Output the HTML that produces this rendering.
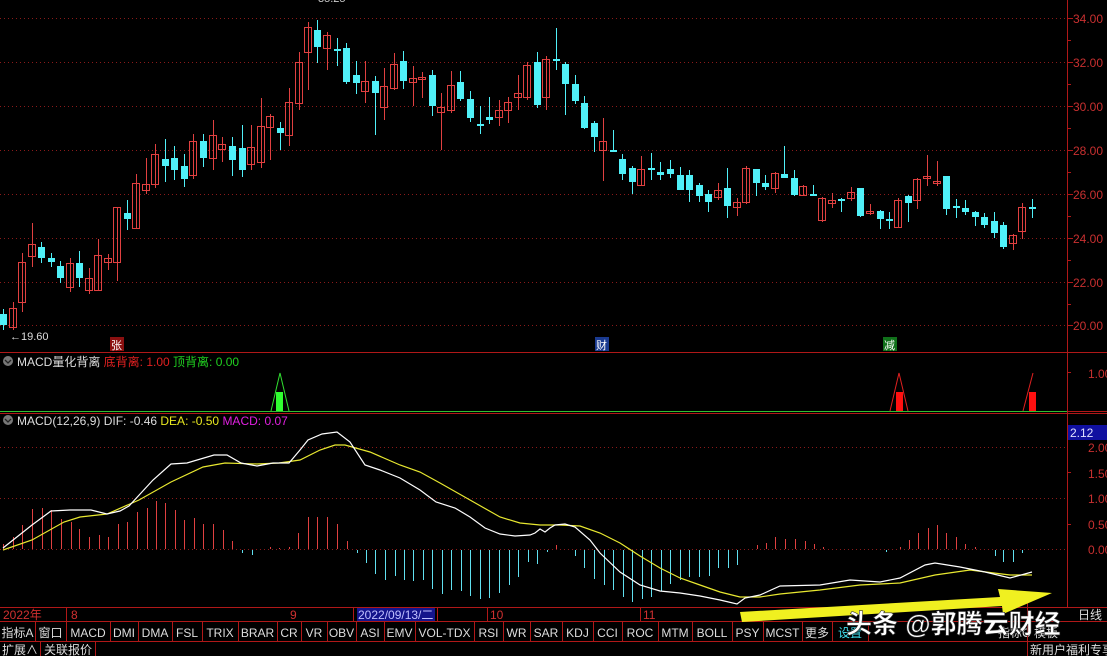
<!DOCTYPE html>
<html><head><meta charset="utf-8"><style>
html,body{margin:0;padding:0;background:#000;width:1107px;height:656px;overflow:hidden;}
svg{display:block;font-family:"Liberation Sans","Noto Sans CJK SC",sans-serif;}
</style></head><body>
<svg id="s" width="1107" height="656" viewBox="0 0 1107 656" xmlns="http://www.w3.org/2000/svg">
<rect width="1107" height="656" fill="#000"/>
<g id="grid" stroke="#8a1a1a" stroke-dasharray="1,3" stroke-width="1"></g>
<g id="cand"></g>
<g id="hist"></g>
<line x1="0" y1="352.5" x2="1107" y2="352.5" stroke="#b01818"/>
<line x1="0" y1="411.5" x2="1067" y2="411.5" stroke="#30c030"/>
<line x1="1067" y1="411.5" x2="1107" y2="411.5" stroke="#b01818"/>
<line x1="0" y1="413.5" x2="1107" y2="413.5" stroke="#b01818"/>
<line x1="1067.5" y1="0" x2="1067.5" y2="607" stroke="#b01818"/>
<g id="ticks" stroke="#b01818"></g>
<g fill="#c83030" font-size="12">
<text x="1073" y="23">34.00</text><text x="1073" y="67">32.00</text><text x="1073" y="111">30.00</text>
<text x="1073" y="155">28.00</text><text x="1073" y="199">26.00</text><text x="1073" y="243">24.00</text>
<text x="1073" y="287">22.00</text><text x="1073" y="330">20.00</text>
<text x="1088" y="378">1.00</text>
<text x="1088" y="452">2.00</text><text x="1088" y="478">1.50</text><text x="1088" y="503">1.00</text>
<text x="1088" y="529">0.50</text><text x="1088" y="554">0.00</text>
</g>
<rect x="1068" y="425" width="39" height="15" fill="#1010a0"/>
<text x="1070" y="437" fill="#e0e0ff" font-size="12">2.12</text>
<text x="318" y="2" fill="#ccc" font-size="11">35.25</text>
<text x="10" y="340" fill="#ddd" font-size="11">←19.60</text>
<rect x="110" y="337" width="14" height="14" fill="#8a1010"/><text x="111" y="349" fill="#fff" font-size="11">张</text>
<rect x="595" y="337" width="14" height="14" fill="#1a3a90"/><text x="596" y="349" fill="#fff" font-size="11">财</text>
<rect x="883" y="337" width="14" height="14" fill="#10701a"/><text x="884" y="349" fill="#fff" font-size="11">减</text>
<circle cx="8" cy="361" r="5" fill="#777"/><path d="M5,360 L8,363 L11,360" stroke="#222" fill="none" stroke-width="1.3"/>
<text x="17" y="366" font-size="12" fill="#ddd">MACD量化背离 <tspan fill="#e02020">底背离: 1.00</tspan> <tspan fill="#20d020">顶背离: 0.00</tspan></text>
<path d="M271,411 L280,373 L289,411" stroke="#30e030" fill="none"/><rect x="276" y="392" width="7" height="19" fill="#30ff30"/>
<path d="M890,411 L899,373 L908,411" stroke="#e02020" fill="none"/><rect x="896" y="392" width="7" height="19" fill="#ff1010"/>
<path d="M1023,411 L1033,373" stroke="#e02020" fill="none"/><rect x="1029" y="392" width="7" height="19" fill="#ff1010"/>
<circle cx="8" cy="420" r="5" fill="#777"/><path d="M5,419 L8,422 L11,419" stroke="#222" fill="none" stroke-width="1.3"/>
<text x="17" y="425" font-size="12" fill="#ddd">MACD(12,26,9) DIF: -0.46 <tspan fill="#e8e820">DEA: -0.50</tspan> <tspan fill="#e020e0">MACD: 0.07</tspan></text>
<polyline id="dea" fill="none" stroke="#e8e830" stroke-width="1.2"/>
<polyline id="dif" fill="none" stroke="#fff" stroke-width="1.2"/>
<rect x="0" y="607" width="1107" height="49" fill="#000"/>
<line x1="0" y1="607.5" x2="1107" y2="607.5" stroke="#b01818"/>
<line x1="0" y1="621.5" x2="1107" y2="621.5" stroke="#b01818"/>
<line x1="0" y1="641.5" x2="1107" y2="641.5" stroke="#b01818"/>
<g id="dl" stroke="#b01818"></g>
<rect x="357" y="608" width="78" height="13" fill="#14148c"/>
<g font-size="12" fill="#d03030">
<text x="3" y="619">2022年</text><text x="71" y="619">8</text><text x="290" y="619">9</text>
<text x="490" y="619">10</text><text x="643" y="619">11</text>
<text x="358" y="619" fill="#c0c0ff">2022/09/13/二</text>
</g>
<g id="tabs" font-size="12" fill="#ddd"></g>
<text x="2" y="654" font-size="12" fill="#ddd">扩展∧</text>
<line x1="40.5" y1="642" x2="40.5" y2="656" stroke="#b01818"/>
<text x="44" y="654" font-size="12" fill="#ddd">关联报价</text>
<line x1="95.5" y1="642" x2="95.5" y2="656" stroke="#b01818"/>
<text x="1030" y="654" font-size="12" fill="#ddd">新用户福利专享</text>
<text x="998" y="637" font-size="12" fill="#ddd">指标C 模板</text>
<text x="1078" y="619" font-size="12" fill="#ddd">日线</text>
<line x1="1027.5" y1="595" x2="1027.5" y2="656" stroke="#b01818"/>
<path d="M740,612 L1000,597 L998,589 L1052,593 L1003,614 L1002,606 L742,622 Z" fill="#f0f020"/>
<text x="846" y="633" font-size="26" fill="#fff" stroke="#333" stroke-width="0.6" font-weight="bold">头条 @郭腾云财经</text>
</svg>
<script>
var NS="http://www.w3.org/2000/svg";
function el(t,a,p){var e=document.createElementNS(NS,t);for(var k in a)e.setAttribute(k,a[k]);document.getElementById(p).appendChild(e);return e;}
[18,62,106,150,194,238,282,325].forEach(function(y){el('line',{x1:0,y1:y+.5,x2:1067,y2:y+.5},'grid');el('line',{x1:1067,y1:y+.5,x2:1073,y2:y+.5},'ticks');});
[447,498,549].forEach(function(y){el('line',{x1:0,y1:y+.5,x2:1067,y2:y+.5},'grid');});
[40,84,128,172,216,260,304,372,472,524].forEach(function(y){el('line',{x1:1067,y1:y+.5,x2:1071,y2:y+.5},'ticks');});
var C=[[3,314,325,'c'],[13,308,327,'r',302,330],[22,262,302,'r',253,312],[32,244,256,'r',223,267],[41,247,258,'c'],[51,258,262,'c'],[60,266,278,'c'],[70,263,287,'r'],[79,263,278,'c',251,287],[89,278,290,'r',268,294],[98,255,290,'r',239,290],[108,258,262,'r',254,270],[117,207,262,'r',207,281],[127,213,219,'c',200,230],[136,183,228,'r',174,228],[146,184,190,'r',158,194],[155,154,184,'r',144,188],[165,159,166,'c',139,182],[174,158,170,'c',146,180],[184,166,179,'c',154,187],[193,141,175,'r',134,179],[203,141,158,'c',134,167],[213,135,158,'r',120,170],[222,144,149,'r',137,162],[232,146,160,'c',137,176],[242,148,170,'c',125,177],[251,147,164,'r',125,170],[261,126,162,'r',98,168],[270,116,127,'r',114,160],[280,128,133,'c',122,150],[289,102,135,'r',88,146],[299,62,103,'r',52,110],[308,27,52,'r',0,90],[317,30,47,'c',20,63],[327,35,48,'r',32,70],[337,49,50,'c',38,66],[346,48,82,'c',43,84],
[356,75,83,'c',61,94],[365,81,91,'r',61,103],[375,81,93,'c',76,135],[384,86,107,'r',68,120],[394,64,88,'r',53,90],[403,61,81,'c',51,89],[413,78,82,'r',66,106],[422,77,79,'r',72,98],[432,75,106,'c',70,116],[441,107,112,'r',93,150],[451,85,110,'r',71,113],[460,82,99,'c',71,101],[470,99,118,'c',91,122],[480,124,125,'c',106,134],[489,117,120,'c',97,124],[499,110,117,'r',100,126],[508,102,110,'r',97,123],[518,93,97,'r',75,110],[527,65,97,'r',62,100],[537,62,105,'c',52,108],[546,59,97,'r',56,110],[556,59,61,'c',28,70],[565,64,84,'c',62,115],[575,84,101,'c',75,104],[584,103,128,'c',96,129],[594,123,137,'c',121,152],[603,141,150,'r',118,181],[613,150,152,'c',130,152],[622,159,174,'c',154,180],[632,168,182,'c',166,194],[641,169,185,'r',156,186],[651,168,170,'c',153,180],[660,172,175,'c',162,180],[670,169,174,'c',160,178],[680,175,190,'c',167,182],
[689,175,190,'c',170,202],[699,185,196,'c',183,202],[708,194,202,'c',190,212],[718,190,197,'r',183,200],[727,188,206,'c',168,218],[737,202,207,'r',198,216],[746,168,202,'r',166,204],[756,169,183,'c',169,196],[765,183,187,'c',175,190],[775,173,188,'r',172,193],[784,174,178,'c',146,178],[794,178,195,'c',170,196],[803,186,195,'r',185,196],[813,194,196,'c',185,196],[822,198,220,'r',197,222],[832,200,203,'r',193,208],[841,199,201,'c',198,212],[851,192,198,'r',187,201],[860,188,216,'c',188,217],[870,211,213,'r',204,215],[880,211,219,'c',210,229],[889,219,221,'c',212,229],[898,200,227,'r',198,227],[908,196,203,'c',195,222],[917,179,200,'r',178,209],[927,176,178,'r',155,186],[937,181,183,'r',161,186],[946,176,209,'c',176,215],[956,206,208,'c',199,218],[965,208,212,'c',200,215],[975,212,217,'c',211,226],[984,217,225,'c',213,228],[994,221,233,'c',212,238],[1003,225,247,'c',222,249],[1013,235,243,'r',234,250],[1022,207,231,'r',203,239],[1032,207,209,'c',199,218]];
C.forEach(function(c){var x=c[0],t=c[1],b=c[2],r=c[3]=='r',h=c[4]||t-5,l=c[5]||b+5;var col=r?'#e04040':'#50f0f8';
el('line',{x1:x+.5,y1:h,x2:x+.5,y2:l,stroke:col},'cand');
if(r){el('rect',{x:x-3.5,y:t+.5,width:7,height:Math.max(b-t,1),fill:'none',stroke:col},'cand');}
else el('rect',{x:x-3,y:t,width:7,height:Math.max(b-t,2),fill:col},'cand');});
var R=[[3,544],[13,537],[22,525],[32,509],[42,508],[51,510],[61,519],[71,522],[79,529],[89,537],[99,535],[108,537],[118,524],[127,522],[137,512],[147,508],[156,501],[165,503],[175,510],[184,520],[194,518],[203,524],[213,524],[223,530],[232,541],[270,547],[279,548],[289,547],[298,533],[308,517],[317,517],[327,517],[337,524],[347,541],[556,545],[757,545],[766,543],[775,537],[785,539],[795,539],[805,541],[814,544],[823,547],[900,547],[909,540],[918,533],[928,528],[937,525],[946,533],[956,537],[965,544],[975,547]];
R.forEach(function(r){el('line',{x1:r[0]+.5,y1:r[1],x2:r[0]+.5,y2:549,stroke:'#e04040'},'hist');});
var B=[[242,553],[252,555],[357,553],[366,563],[375,574],[385,580],[395,576],[404,580],[413,581],[423,580],[432,589],[442,594],[451,590],[461,591],[470,596],[480,599],[489,598],[499,593],[509,585],[518,577],[528,562],[537,564],[547,552],[575,556],[584,568],[594,579],[604,585],[613,590],[623,597],[632,602],[642,599],[651,597],[661,591],[670,584],[680,580],[689,577],[699,577],[709,576],[718,568],[728,568],[737,565],[886,552],[995,556],[1003,562],[1013,562],[1022,553]];
B.forEach(function(r){el('line',{x1:r[0]+.5,y1:550,x2:r[0]+.5,y2:r[1],stroke:'#60e0f0'},'hist');});
document.getElementById('dif').setAttribute('points',"3,548 32,525 51,511 70,510 91,510 107,514 120,511 129,506 153,480 171,464 187,463 214,455 227,455 241,463 257,466 273,463 289,463 300,450 308,440 322,434 337,432 350,442 365,465 380,470 400,478 420,490 436,502 455,508 470,517 485,528 500,534 515,536 530,535 535,533 540,529 545,532 550,528 555,525 565,524 575,527 590,540 600,553 620,572 640,585 660,591 680,593 700,596 720,600 737,604 745,598 760,595 780,586 820,585 850,580 880,582 900,578 925,565 935,563 960,567 985,572 1010,578 1032,572");
document.getElementById('dea').setAttribute('points',"3,550 32,540 64,522 80,517 107,514 139,500 171,482 203,467 225,463 257,464 279,463 300,460 320,450 335,445 345,445 370,452 400,465 420,472 440,483 470,500 500,517 520,523 540,525 560,525 580,526 600,533 620,543 640,556 660,568 680,578 700,585 720,592 740,597 760,597 780,594 820,590 860,585 900,583 935,575 970,570 1010,575 1032,575");
[66,353,437,487,640].forEach(function(x){el('line',{x1:x+.5,y1:608,x2:x+.5,y2:621},'dl');});
var T=[["指标A",0,35],["窗口",35,66],["MACD",66,110],["DMI",110,138],["DMA",138,172],["FSL",172,202],["TRIX",202,238],["BRAR",238,277],["CR",277,301],["VR",301,327],["OBV",327,356],["ASI",356,384],["EMV",384,415],["VOL-TDX",415,474],["RSI",474,503],["WR",503,530],["SAR",530,562],["KDJ",562,593],["CCI",593,622],["ROC",622,658],["MTM",658,692],["BOLL",692,732],["PSY",732,763],["MCST",763,802],["更多",802,832],["设置",832,868]];
T.forEach(function(t){var e=el('text',{x:(t[1]+t[2])/2,y:637,'text-anchor':'middle'},'tabs');e.textContent=t[0];if(t[0]=="设置")e.setAttribute('fill','#40e0f0');
el('line',{x1:t[2]+.5,y1:622,x2:t[2]+.5,y2:641,stroke:'#b01818'},'dl');});
</script>
</body></html>
